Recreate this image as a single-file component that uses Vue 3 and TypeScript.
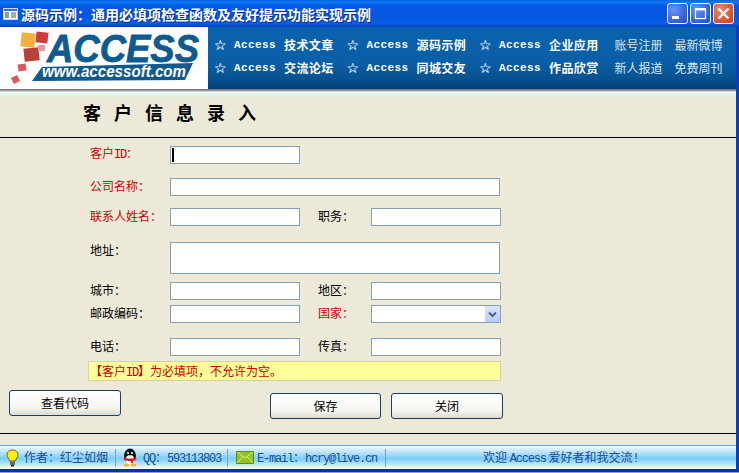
<script setup lang="ts">
interface NavItem {
  word: string
  links: string
}

const navColumns: NavItem[][] = [
  [
    { word: 'Access', links: '技术文章' },
    { word: 'Access', links: '交流论坛' }
  ],
  [
    { word: 'Access', links: '源码示例' },
    { word: 'Access', links: '同城交友' }
  ],
  [
    { word: 'Access', links: '企业应用' },
    { word: 'Access', links: '作品欣赏' }
  ]
]

const sideLinks = [
  ['账号注册', '最新微博'],
  ['新人报道', '免费周刊']
]
</script>

<template>
  <div class="window">
    <div class="titlebar">
      <svg class="app-icon" width="15" height="12" viewBox="0 0 15 12">
        <rect x="0.5" y="0.5" width="14" height="11" fill="#fff" stroke="#c9d6f0" />
        <rect x="1" y="1" width="13" height="2" fill="#3a6fd8" />
        <rect x="2" y="4" width="4" height="6" fill="#8a9ab8" />
        <path d="M8 5h5M8 7h5M8 9h5" stroke="#44577e" stroke-width="1" />
      </svg>
      <span class="title-text">源码示例：通用必填项检查函数及友好提示功能实现示例</span>
      <div class="win-buttons">
        <div class="win-btn">
          <svg width="19" height="19" viewBox="0 0 19 19"><rect x="4" y="12" width="7" height="3" fill="#fff" /></svg>
        </div>
        <div class="win-btn">
          <svg width="19" height="19" viewBox="0 0 19 19"><rect x="4.5" y="5" width="10" height="9.5" fill="none" stroke="#fff" stroke-width="1.2" /><rect x="4" y="4" width="11" height="2.4" fill="#fff" /></svg>
        </div>
        <div class="win-btn close">
          <svg width="19" height="19" viewBox="0 0 19 19"><path d="M4.5 4.5l10 10M14.5 4.5l-10 10" stroke="#fff" stroke-width="2.4" /></svg>
        </div>
      </div>
    </div>

    <div class="body">
      <header class="banner">
        <svg class="logo" width="208" height="62" viewBox="0 0 208 62">
          <rect width="208" height="62" fill="#fff" />
          <rect x="21" y="6" width="14" height="14" fill="#f2b13c" transform="rotate(6 28 13)" />
          <rect x="36" y="5" width="12" height="11" fill="#cf3a3e" transform="rotate(6 42 10)" />
          <rect x="24" y="21" width="15" height="13" fill="#b8413a" transform="rotate(-6 31 27)" />
          <rect x="38" y="18" width="7" height="6" fill="#e39a9a" />
          <rect x="18" y="37" width="8" height="7" fill="#d9595c" transform="rotate(-8 22 40)" />
          <polygon points="11,51 17,48 20,54 14,57" fill="#d9595c" />
          <text class="logo-word" x="47" y="35" textLength="152" lengthAdjust="spacingAndGlyphs">ACCESS</text>
          <polygon points="42,40 193,36 185,53 32,54" fill="#0f5a8e" />
          <text class="logo-url" x="42" y="50" textLength="144" lengthAdjust="spacingAndGlyphs">www.accessoft.com</text>
        </svg>
        <nav class="nav">
          <div v-for="(col, i) in navColumns" :key="i" class="nav-col">
            <a v-for="item in col" :key="item.links" class="nav-link">
              <span class="star">☆</span>
              <span class="nav-word">{{ item.word }}</span>
              <span class="nav-cjk">{{ item.links }}</span>
            </a>
          </div>
          <div class="side-links">
            <div v-for="(row, i) in sideLinks" :key="i" class="side-row">
              <a v-for="link in row" :key="link">{{ link }}</a>
            </div>
          </div>
        </nav>
      </header>
      <div class="banner-edge"></div>

      <main class="content">
        <h1 class="heading">客户信息录入</h1>
        <div class="rule"></div>

        <form class="form" @submit.prevent>
          <div class="row">
            <label class="req">客户<span class="lat">ID</span>：</label>
            <div class="caret-wrap">
              <input class="box short" type="text" />
              <i class="caret"></i>
            </div>
          </div>
          <div class="row gap-14">
            <label class="req">公司名称：</label>
            <input class="box long" type="text" />
          </div>
          <div class="row gap-12">
            <label class="req">联系人姓名：</label>
            <input class="box short" type="text" />
            <label class="label-2">职务：</label>
            <input class="box short" type="text" />
          </div>
          <div class="row gap-16 top">
            <label>地址：</label>
            <textarea class="box long area"></textarea>
          </div>
          <div class="row gap-8">
            <label>城市：</label>
            <input class="box short" type="text" />
            <label class="label-2">地区：</label>
            <input class="box short" type="text" />
          </div>
          <div class="row gap-5">
            <label>邮政编码：</label>
            <input class="box short" type="text" />
            <label class="label-2 req">国家：</label>
            <div class="select-wrap">
              <select class="box short select"></select>
              <span class="select-btn">
                <svg width="9" height="7" viewBox="0 0 9 7"><path d="M1 1.5l3.5 3.5L8 1.5" fill="none" stroke="#4d6185" stroke-width="2" /></svg>
              </span>
            </div>
          </div>
          <div class="row gap-15">
            <label>电话：</label>
            <input class="box short" type="text" />
            <label class="label-2">传真：</label>
            <input class="box short" type="text" />
          </div>
          <div class="notice">【客户<span class="lat">ID</span>】为必填项，不允许为空。</div>
        </form>

        <div class="actions">
          <button class="btn" type="button">查看代码</button>
          <button class="btn save" type="button">保存</button>
          <button class="btn lower" type="button">关闭</button>
        </div>

        <div class="rule foot-rule"></div>
      </main>

      <footer class="status">
        <div class="cell author">
          <svg width="13" height="18" viewBox="0 0 13 18">
            <path d="M6.5 1C3 1 1 3.200 1 5.800c0 2.500 1.900 3.700 2.700 6.200h5.600c.8-2.500 2.700-3.700 2.700-6.200C12 3.200 10 1 6.500 1z" fill="#ffee10" stroke="#6b6420" stroke-width="1" />
            <rect x="4" y="12.500" width="5" height="3.500" fill="#666" />
            <rect x="5" y="16" width="3" height="1.500" fill="#222" />
          </svg>
          <span class="cell-text">作者：红尘如烟</span>
        </div>
        <div class="cell qq">
          <svg width="16" height="19" viewBox="0 0 16 19">
            <ellipse cx="8" cy="8" rx="6" ry="7.500" fill="#111" />
            <ellipse cx="8" cy="12" rx="4.500" ry="5" fill="#fff" />
            <path d="M2 9.500c3 1.500 9 1.500 12 0l.5 2c-1.500 1-2.500 1.200-3.500 1.300v2.500H9v-2.300c-2.500.2-5 -.2-7.500-1.500z" fill="#d81e1e" />
            <ellipse cx="4.500" cy="17" rx="3" ry="1.600" fill="#f5b81c" />
            <ellipse cx="11.500" cy="17" rx="3" ry="1.600" fill="#f5b81c" />
            <circle cx="6" cy="5" r="1" fill="#fff" />
            <circle cx="10" cy="5" r="1" fill="#fff" />
            <path d="M6 7h4L8 8.500z" fill="#f5b81c" />
          </svg>
          <span class="cell-text"><span class="lat">QQ</span>：<span class="lat">593113803</span></span>
        </div>
        <div class="cell mail">
          <svg width="18" height="13" viewBox="0 0 18 13">
            <rect x="0.500" y="0.500" width="17" height="12" fill="#8fc31f" stroke="#5d8a1e" />
            <path d="M1 1l8 6 8-6M1 12l6-6.500M17 12l-6-6.500" fill="none" stroke="#dcf08c" stroke-width="1" />
          </svg>
          <span class="cell-text"><span class="lat">E-mail</span>：<span class="lat">hcry@live.cn</span></span>
        </div>
        <div class="cell welcome"><span class="cell-text">欢迎 <span class="lat">Access</span> 爱好者和我交流<span class="lat">!</span></span></div>
      </footer>
    </div>
  </div>
</template>

<style scoped>
.window {
  width: 739px;
  height: 473px;
  display: flex;
  flex-direction: column;
  overflow: hidden;
  box-sizing: border-box;
  padding-bottom: 1px;
  font-family: "Noto Sans CJK SC", "Liberation Sans", sans-serif;
  font-size: 12px;
  color: #000;
  background: #8f9fd6;
}

.titlebar {
  height: 27px;
  flex: none;
  display: flex;
  align-items: center;
  padding: 0 5px 0 3px;
  box-sizing: border-box;
  background: linear-gradient(180deg, #0a62dc 0%, #0a7bf4 8%, #0558e6 22%, #0455e0 60%, #0761ec 85%, #0342be 100%);
}

.app-icon {
  flex: none;
  margin-right: 3px;
}

.title-text {
  color: #fff;
  font-size: 14px;
  font-weight: 700;
  line-height: 20px;
  text-shadow: 1px 1px 0 #0a2c8c;
  white-space: nowrap;
}

.win-buttons {
  margin-left: auto;
  display: flex;
  gap: 2px;
}

.win-btn {
  width: 19px;
  height: 19px;
  border: 1px solid #fff;
  border-radius: 3px;
  background: radial-gradient(circle at 30% 30%, #6b93ee 0%, #2f5fd8 70%, #2450c4 100%);
}

.win-btn svg {
  display: block;
}

.win-btn.close {
  background: radial-gradient(circle at 30% 30%, #ec8a68 0%, #d8502c 70%, #c2401e 100%);
}

.body {
  flex: 1;
  display: flex;
  flex-direction: column;
  min-height: 0;
  background: #ece9d8;
  border-right: 3px solid #0a3cc4;
  border-bottom: 3px solid #0a2fb4;
}

.banner {
  height: 62px;
  flex: none;
  display: flex;
  background: linear-gradient(180deg, #0a62ae 0%, #0a5fa6 55%, #07518f 85%, #043f74 100%);
}

.logo {
  flex: none;
  display: block;
}

.logo-word {
  font-family: "Liberation Sans", sans-serif;
  font-size: 38px;
  font-style: italic;
  font-weight: 700;
  fill: #0f5a8e;
  stroke: #0f5a8e;
  stroke-width: 0.8px;
}

.logo-url {
  font-family: "Liberation Sans", sans-serif;
  font-size: 16px;
  font-style: italic;
  font-weight: 700;
  fill: #fff;
}

.nav {
  display: flex;
  padding: 6px 0 0 6px;
  color: #fff;
}

.nav-col {
  width: 132.500px;
}

.nav-link {
  height: 23px;
  display: flex;
  align-items: center;
  font-weight: 700;
  white-space: nowrap;
}

.star {
  width: 20px;
  font-family: "DejaVu Sans", sans-serif;
  font-size: 14px;
  font-weight: 700;
  text-shadow: 0 0 1px #fff;
}

.nav-word {
  width: 50px;
  font-family: "Liberation Mono", monospace;
  font-size: 11px;
  letter-spacing: 0.4px;
}

.nav-cjk {
  letter-spacing: 0.4px;
}

.side-links {
  padding-left: 3px;
  color: #d6e6f4;
}

.side-row {
  height: 23px;
  display: flex;
  align-items: center;
  gap: 12px;
}

.banner-edge {
  height: 8px;
  flex: none;
  background: linear-gradient(180deg, #6a6a72 0%, #a8a8a8 25%, #fff 38%, #e2f7ea 50%, #dff5e8 88%, #ece9d8 100%);
}

.content {
  flex: 1;
  display: flex;
  flex-direction: column;
  min-height: 0;
}

.heading {
  margin: 0;
  height: 40px;
  padding-left: 83px;
  font-size: 18px;
  font-weight: 700;
  line-height: 30px;
  letter-spacing: 13px;
}

.rule {
  height: 1px;
  flex: none;
  background: #000;
}

.form {
  padding: 8px 0 0 88px;
}

.row {
  display: flex;
  align-items: center;
  height: 18px;
  padding-left: 2px;
}

.row.top {
  height: 32px;
  align-items: flex-start;
}

.gap-5 { margin-top: 5px; }
.gap-8 { margin-top: 8px; }
.gap-12 { margin-top: 12px; }
.gap-14 { margin-top: 14px; }
.gap-15 { margin-top: 15px; }
.gap-16 { margin-top: 16px; }

label {
  width: 80px;
  flex: none;
  line-height: 16px;
  padding-bottom: 2px;
  white-space: nowrap;
}

.label-2 {
  width: 53px;
  margin-left: 18px;
}

.req {
  color: #cc0000;
}

.lat {
  font-family: "Liberation Mono", monospace;
  font-size: 12px;
  letter-spacing: -1.2px;
}

.box {
  display: block;
  box-sizing: border-box;
  height: 18px;
  margin: 0;
  padding: 0 2px;
  border: 1px solid #86a0b6;
  border-radius: 0;
  background: #fff;
  outline: none;
}

.short {
  width: 130px;
}

.long {
  width: 330px;
}

.area {
  height: 32px;
  resize: none;
  overflow: hidden;
}

.caret-wrap,
.select-wrap {
  position: relative;
}

.caret {
  position: absolute;
  left: 2px;
  top: 2px;
  width: 2px;
  height: 14px;
  background: #000;
}

.select {
  appearance: none;
}

.select-btn {
  position: absolute;
  right: 1px;
  top: 1px;
  width: 15px;
  height: 16px;
  display: flex;
  align-items: center;
  justify-content: center;
  border-radius: 1px;
  background: linear-gradient(180deg, #dbe6fd 0%, #b9ccf8 100%);
}

.notice {
  box-sizing: border-box;
  width: 413px;
  height: 20px;
  margin-top: 5px;
  padding-left: 1px;
  line-height: 17px;
  color: #cc0000;
  background: #ffff99;
  border: 1px solid #d6d2a8;
}

.actions {
  display: flex;
  align-items: flex-start;
  gap: 10px;
  padding: 9px 0 0 9px;
}

.btn {
  box-sizing: border-box;
  width: 112px;
  height: 26px;
  padding: 0 0 2px;
  font: inherit;
  color: #000;
  border: 1px solid #1e3f66;
  border-radius: 3px;
  background: linear-gradient(180deg, #fff 0%, #f6f5f0 70%, #dcdad0 100%);
}

.save {
  margin: 3px 0 0 139px;
  width: 111px;
}

.lower {
  margin-top: 3px;
}

.foot-rule {
  margin-top: 14px;
}

.status {
  height: 24px;
  flex: none;
  display: flex;
  align-items: center;
  color: #1d4c9c;
  border-top: 1px solid #6ea2cc;
  box-sizing: border-box;
  background: linear-gradient(180deg, #eef8fe 0%, #bfe6fb 25%, #78cdf8 55%, #bfe6fb 80%, #ffffff 100%);
}

.cell {
  height: 18px;
  display: flex;
  align-items: center;
  box-sizing: border-box;
  white-space: pre;
}

.cell-text {
  padding-bottom: 2px;
}

.author {
  width: 116px;
  padding-left: 6px;
  gap: 5px;
  border-right: 1px solid #7d9fb8;
}

.qq {
  width: 112px;
  padding-left: 6px;
  gap: 5px;
  border-right: 1px solid #7d9fb8;
}

.mail {
  width: 158px;
  padding-left: 8px;
  gap: 3px;
  border-right: 1px solid #7d9fb8;
}

.welcome {
  padding-left: 97px;
}
</style>

<style>
html,
body {
  margin: 0;
  overflow: hidden;
}
</style>
